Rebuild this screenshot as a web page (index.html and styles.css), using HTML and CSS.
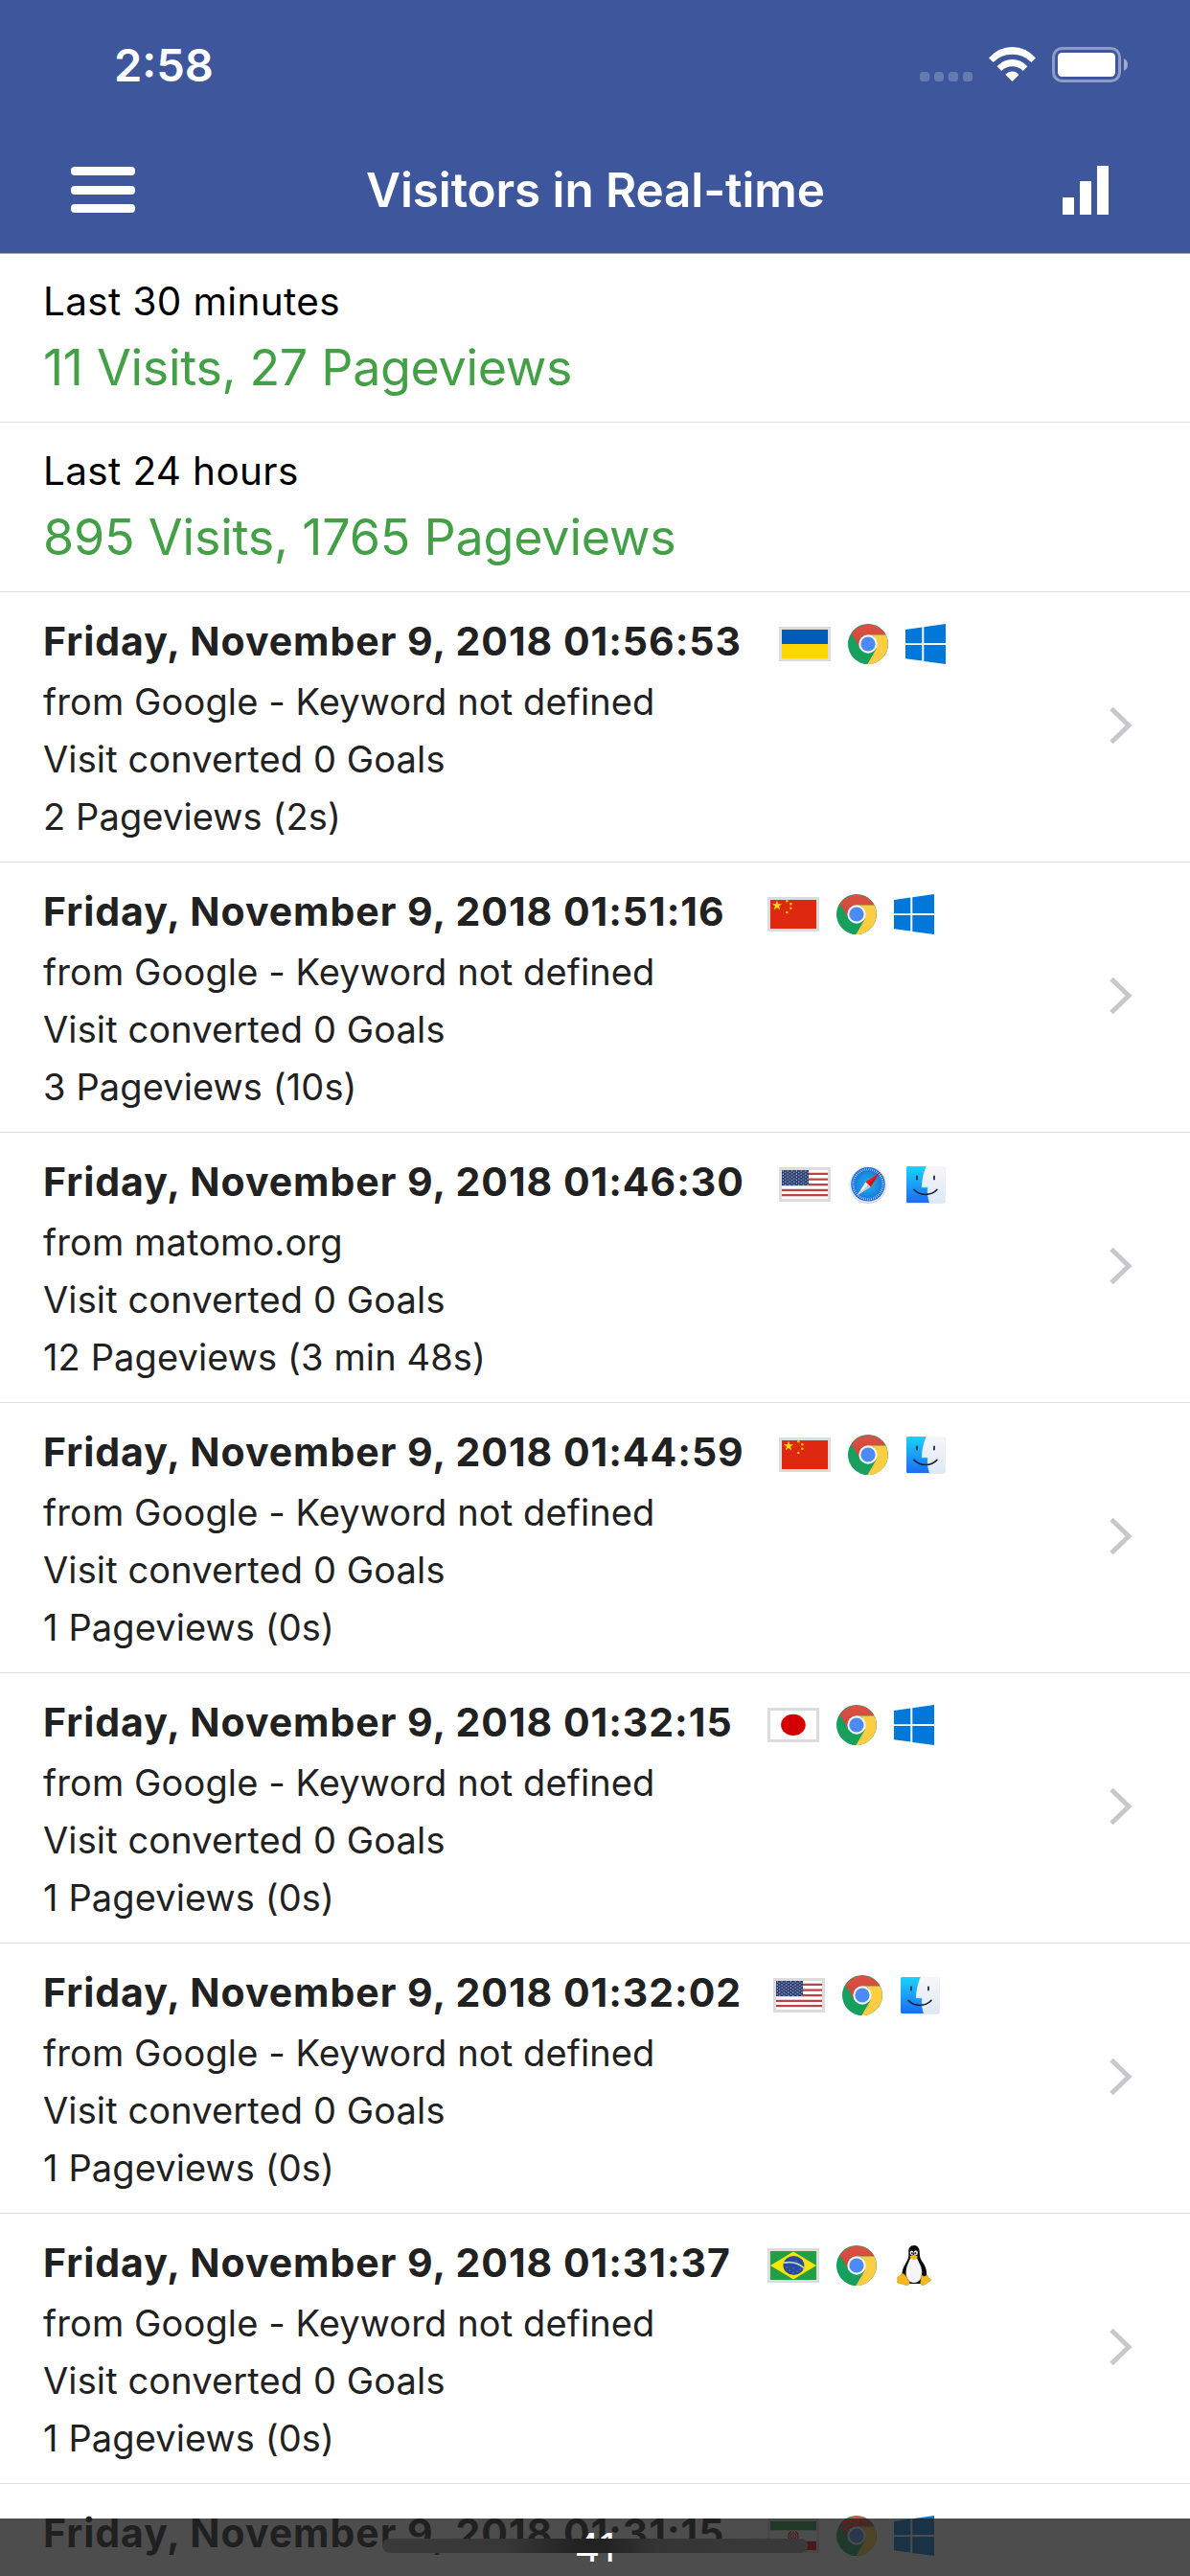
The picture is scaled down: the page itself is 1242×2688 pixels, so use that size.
FILE: index.html
```html
<!DOCTYPE html>
<html lang="en">
<head>
<meta charset="utf-8">
<title>Visitors in Real-time</title>
<link rel="stylesheet" href="styles.css">
</head>
<body>
<svg class="sprite" aria-hidden="true">
  <defs>
    <linearGradient id="g-finder" x1="0" y1="0" x2="0" y2="1"><stop offset="0" stop-color="#19d3fd"/><stop offset="1" stop-color="#1c6cf2"/></linearGradient>
    <linearGradient id="g-face" x1="0" y1="0" x2="0" y2="1"><stop offset="0" stop-color="#f7f6f6"/><stop offset="1" stop-color="#dde9f6"/></linearGradient>
    <radialGradient id="g-safari"><stop offset="0" stop-color="#1cb4e0"/><stop offset="0.6" stop-color="#1b8de0"/><stop offset="1" stop-color="#2266dc"/></radialGradient>
    <linearGradient id="g-red" x1="0" y1="0" x2="0" y2="1"><stop offset="0" stop-color="#dd5144"/><stop offset="1" stop-color="#c9453a"/></linearGradient>
  </defs>
  <symbol id="chrome" viewBox="0 0 42 42">
    <circle cx="21" cy="21" r="21" fill="#17a05d"/>
    <path d="M3.4 10.5A21 21 0 0 1 39.6 11.5H21L12.6 25.3Z" fill="url(#g-red)"/>
    <path d="M39.4 11.4A21 21 0 0 1 20.2 42L30 25.5 27 13 21 11.4Z" fill="#ffcd42"/>
    <path d="M3.4 10.5L12.6 26 15 31 26.5 31 20.2 42A21 21 0 0 1 3.4 10.5Z" fill="#17a05d"/>
    <path d="M26.5 31L30 25.3 24 41Z" fill="#d9a935" opacity=".5"/>
    <circle cx="21" cy="21" r="9.7" fill="#f4f4f4"/>
    <circle cx="21" cy="21" r="7.6" fill="#4c8bf5"/>
  </symbol>
  <symbol id="windows" viewBox="0 0 42 42">
    <path fill="#0078d9" d="M0 6L17.3 3.5V20.2H0ZM19.3 3.2L42 0V20H19.3ZM0 22H17.3V38.6L0 36.2ZM19.3 22H42V42L19.3 38.9Z"/>
  </symbol>
  <symbol id="finder" viewBox="0 0 42 42">
    <rect x="1" y="2.6" width="40.4" height="38" rx="1.6" fill="#cfd4da"/>
    <rect x="1" y="2" width="40.2" height="38" rx="1.6" fill="url(#g-face)"/>
    <path d="M2.6 2H22C19 9 17.5 16 17.3 23.8H23.4C23 30 23.4 35 25.3 40H2.6Q1 40 1 38.4V3.6Q1 2 2.6 2Z" fill="url(#g-finder)"/>
    <path d="M22 2C19 9 17.5 16 17.3 23.8H23.4C23 30 23.4 35 25.3 40" fill="none" stroke="#fff" stroke-width=".8" opacity=".6"/>
    <path d="M12 12.3V15.6M30 12.3V15.6" stroke="#1b2b45" stroke-width="1.8" stroke-linecap="round"/>
    <path d="M9 26.3C15 33.2 27 33.2 33 26.3" fill="none" stroke="#101c30" stroke-width="1.6" stroke-linecap="round"/>
  </symbol>
  <symbol id="safari" viewBox="0 0 42 42">
    <circle cx="21" cy="21.6" r="19.4" fill="#c9c9c9"/>
    <circle cx="21" cy="20.8" r="19.2" fill="#eceef0"/>
    <circle cx="21" cy="20.8" r="17.8" fill="url(#g-safari)"/>
    <circle cx="21" cy="20.8" r="15.6" fill="none" stroke="#bfe0fa" stroke-width="2.2" stroke-dasharray=".7 1.34"/>
    <path d="M33 8.6L18.4 18.4 23.6 23.4Z" fill="#fb1715"/>
    <path d="M33 8.6L21 20.9 23.6 23.4Z" fill="#d10f14"/>
    <path d="M9.6 32.2L18.4 18.4 23.6 23.4Z" fill="#f4f6f8"/>
    <path d="M9.6 32.2L21 20.9 23.6 23.4Z" fill="#c8ccd0"/>
  </symbol>
  <symbol id="tux" viewBox="0 0 42 42">
    <path d="M21 0C16.5 0 15 3.4 15.3 7C15.6 12 15 14 12.4 18.5C9.8 23 8 27 8.4 32L12 40H30L34 32C34.8 26 32.4 20.5 29.6 17C27 13.6 26.9 11 26.8 7C26.6 2.6 24.4 0 21 0Z" fill="#0c0c0c"/>
    <path d="M17 13.6C15.4 18 12.6 22 12.6 29C12.6 35 16 39 21 39C26 39 29.2 35 29.2 28C29.2 22 25.6 18 24.4 13.6Z" fill="#f5f5f5"/>
    <ellipse cx="18.5" cy="7.8" rx="1.8" ry="2.3" fill="#eee"/><ellipse cx="22.8" cy="7.8" rx="2.1" ry="2.5" fill="#eee"/>
    <circle cx="18.9" cy="8.2" r=".9" fill="#111"/><circle cx="22.4" cy="8.2" r="1" fill="#111"/>
    <path d="M16.4 11.6Q20 8.4 24.8 11.4Q24 14.4 20.4 15Q17.2 14.4 16.4 11.6Z" fill="#f5bd18"/>
    <path d="M8.8 29.4C6.8 29.6 6.6 32.4 4.2 32.8C3 33.2 4.4 36 3.4 38.6C5 40.4 9.4 40 12.4 41.6C15.4 42 17 40 16 37.6C14 34.4 11.6 29.4 8.8 29.4Z" fill="#f5b91c" stroke="#b98307" stroke-width=".5"/>
    <path d="M29.2 31C27.6 31 28.6 36 27.6 39C28 42 31 42.2 33 40.4C35 38.4 38.6 37.4 38.8 36C37 35 35.6 33 34.6 30.6C33 32.4 31 33 29.2 31Z" fill="#f5b91c" stroke="#b98307" stroke-width=".5"/>
  </symbol>
  <symbol id="ua" viewBox="0 0 48 30"><path fill="#005bbd" d="M0 0H48V15H0Z"/><path fill="#ffd600" d="M0 15H48V30H0Z"/></symbol>
  <symbol id="cn" viewBox="0 0 48 30">
    <path fill="#de2910" d="M0 0H48V30H0Z"/>
    <path fill="#ffde00" d="M7 .6L8.2 4.2H12.2L9 6.6L10.2 10.4L7 8.1L3.8 10.4L5 6.6L1.8 4.2H5.8Z"/>
    <g fill="#ffc400"><circle cx="17.3" cy="1.2" r="1.3"/><circle cx="21.3" cy="4.2" r="1.3"/><circle cx="21.3" cy="8.8" r="1.3"/><circle cx="17.3" cy="13" r="1.3"/></g>
  </symbol>
  <pattern id="stars" width="4.7" height="3.2" patternUnits="userSpaceOnUse"><circle cx="1.3" cy=".9" r=".62" fill="#dfe3ee"/><circle cx="3.6" cy="2.5" r=".62" fill="#dfe3ee"/></pattern>
  <symbol id="us" viewBox="0 0 48 30">
    <path fill="#fff" d="M0 0H48V30H0Z"/>
    <path stroke="#c04048" stroke-width="2.3" d="M0 3.8H48M0 9.6H48M0 15.2H48M0 20.8H48M0 26.2H48"/>
    <path fill="#25396f" d="M0 0H28V16H0Z"/><path fill="url(#stars)" d="M0 0H28V16H0Z"/>
  </symbol>
  <symbol id="jp" viewBox="0 0 48 30"><path fill="#fff" d="M0 0H48V30H0Z"/><ellipse cx="23.9" cy="14.9" rx="12.8" ry="11.2" fill="#d30000"/></symbol>
  <symbol id="br" viewBox="0 0 48 30">
    <path fill="#229e45" d="M0 0H48V30H0Z"/><path fill="#f8e509" d="M24 .6L48 15L24 29.6L0 15Z"/>
    <ellipse cx="24.4" cy="15" rx="11" ry="10" fill="#2b49a3"/>
    <path d="M14 12.2C22 10.8 30 13 35 17.6" fill="none" stroke="#b9d8c4" stroke-width="1.7"/>
    <g fill="#8fa3d6"><circle cx="17" cy="17" r=".6"/><circle cx="20" cy="20" r=".6"/><circle cx="24" cy="18" r=".6"/><circle cx="28" cy="21" r=".6"/><circle cx="31" cy="19" r=".6"/><circle cx="24" cy="22.6" r=".6"/><circle cx="27" cy="10" r=".6"/></g>
  </symbol>
  <symbol id="ir" viewBox="0 0 48 30">
    <path fill="#fff" d="M0 0H48V30H0Z"/><path fill="#239f40" d="M0 0H48V9.2H0Z"/><path fill="#da0000" d="M0 20.8H48V30H0Z"/>
    <path fill="none" stroke="#da0000" stroke-width="1.1" d="M24 10V20M22 10.6C17.6 13 18 18 22 19.6M26 10.6C30.4 13 30 18 26 19.6M22.4 12C20.6 14.6 21 17 23 18.6M25.6 12C27.4 14.6 27 17 25 18.6"/>
  </symbol>
</svg>

<div class="screen">
  <header class="header">
    <div class="status">
      <span class="clock">2:58</span>
      <div class="indicators">
        <span class="cell"><i></i><i></i><i></i><i></i></span>
        <svg class="wifi" viewBox="0 0 49 36"><path fill="#fff" d="M0 11.4Q10.4 0 24.5 0T49 11.4L44.4 16Q36 7.8 24.5 7.8T4.6 16ZM8.6 20.2Q15.4 13 24.5 13T40.4 20.2L35.8 24.9Q31 20.3 24.5 20.3T13.2 24.9ZM17.4 29Q20.4 25.6 24.5 25.6T31.6 29L24.5 36Z"/></svg>
        <svg class="battery" viewBox="0 0 80 37"><rect x="1.5" y="1.5" width="69" height="34" rx="9" fill="none" stroke="#fff" stroke-opacity=".42" stroke-width="3"/><rect x="6" y="6" width="60" height="25" rx="4.5" fill="#fff"/><path d="M75 12Q79 14 79 18.5T75 25Z" fill="#fff" fill-opacity=".5"/></svg>
      </div>
    </div>
    <nav class="nav">
      <span class="menu"><i></i><i></i><i></i></span>
      <h1 class="title">Visitors in Real-time</h1>
      <svg class="chart" viewBox="0 0 48 51"><path fill="#fff" d="M0 33H12V51H0ZM18 16H30V51H18ZM36 0H48V51H36Z"/></svg>
    </nav>
  </header>

  <section class="summary">
    <p class="period">Last 30 minutes</p>
    <p class="total total-short">11 Visits, 27 Pageviews</p>
  </section>
  <section class="summary summary-day">
    <p class="period">Last 24 hours</p>
    <p class="total">895 Visits, 1765 Pageviews</p>
  </section>

  <main class="visits">
    <article class="visit">
      <div class="details">
        <div class="head"><h2 class="when when-wide">Friday, November 9, 2018 01:56:53</h2><svg class="flag"><use href="#ua"/></svg><svg class="icon"><use href="#chrome"/></svg><svg class="icon"><use href="#windows"/></svg></div>
        <p>from Google - Keyword not defined</p><p>Visit converted 0 Goals</p><p>2 Pageviews (2s)</p>
      </div>
      <svg class="chevron" viewBox="0 0 24 40"><path d="M2 2.5L20 20L2 37.5"/></svg>
    </article>
    <article class="visit">
      <div class="details">
        <div class="head"><h2 class="when">Friday, November 9, 2018 01:51:16</h2><svg class="flag"><use href="#cn"/></svg><svg class="icon"><use href="#chrome"/></svg><svg class="icon"><use href="#windows"/></svg></div>
        <p>from Google - Keyword not defined</p><p>Visit converted 0 Goals</p><p>3 Pageviews (10s)</p>
      </div>
      <svg class="chevron" viewBox="0 0 24 40"><path d="M2 2.5L20 20L2 37.5"/></svg>
    </article>
    <article class="visit">
      <div class="details">
        <div class="head"><h2 class="when when-wide">Friday, November 9, 2018 01:46:30</h2><svg class="flag"><use href="#us"/></svg><svg class="icon"><use href="#safari"/></svg><svg class="icon"><use href="#finder"/></svg></div>
        <p>from matomo.org</p><p>Visit converted 0 Goals</p><p>12 Pageviews (3 min 48s)</p>
      </div>
      <svg class="chevron" viewBox="0 0 24 40"><path d="M2 2.5L20 20L2 37.5"/></svg>
    </article>
    <article class="visit">
      <div class="details">
        <div class="head"><h2 class="when when-wide">Friday, November 9, 2018 01:44:59</h2><svg class="flag"><use href="#cn"/></svg><svg class="icon"><use href="#chrome"/></svg><svg class="icon"><use href="#finder"/></svg></div>
        <p>from Google - Keyword not defined</p><p>Visit converted 0 Goals</p><p>1 Pageviews (0s)</p>
      </div>
      <svg class="chevron" viewBox="0 0 24 40"><path d="M2 2.5L20 20L2 37.5"/></svg>
    </article>
    <article class="visit">
      <div class="details">
        <div class="head"><h2 class="when">Friday, November 9, 2018 01:32:15</h2><svg class="flag"><use href="#jp"/></svg><svg class="icon"><use href="#chrome"/></svg><svg class="icon"><use href="#windows"/></svg></div>
        <p>from Google - Keyword not defined</p><p>Visit converted 0 Goals</p><p>1 Pageviews (0s)</p>
      </div>
      <svg class="chevron" viewBox="0 0 24 40"><path d="M2 2.5L20 20L2 37.5"/></svg>
    </article>
    <article class="visit">
      <div class="details">
        <div class="head"><h2 class="when when-mid">Friday, November 9, 2018 01:32:02</h2><svg class="flag"><use href="#us"/></svg><svg class="icon"><use href="#chrome"/></svg><svg class="icon"><use href="#finder"/></svg></div>
        <p>from Google - Keyword not defined</p><p>Visit converted 0 Goals</p><p>1 Pageviews (0s)</p>
      </div>
      <svg class="chevron" viewBox="0 0 24 40"><path d="M2 2.5L20 20L2 37.5"/></svg>
    </article>
    <article class="visit">
      <div class="details">
        <div class="head"><h2 class="when">Friday, November 9, 2018 01:31:37</h2><svg class="flag"><use href="#br"/></svg><svg class="icon"><use href="#chrome"/></svg><svg class="icon"><use href="#tux"/></svg></div>
        <p>from Google - Keyword not defined</p><p>Visit converted 0 Goals</p><p>1 Pageviews (0s)</p>
      </div>
      <svg class="chevron" viewBox="0 0 24 40"><path d="M2 2.5L20 20L2 37.5"/></svg>
    </article>
    <article class="visit">
      <div class="details">
        <div class="head"><h2 class="when">Friday, November 9, 2018 01:31:15</h2><svg class="flag"><use href="#ir"/></svg><svg class="icon"><use href="#chrome"/></svg><svg class="icon"><use href="#windows"/></svg></div>
      </div>
    </article>
  </main>

  <div class="counter">41</div>
  <div class="home-bar"></div>
</div>
</body>
</html>
```
FILE: styles.css
```css
* { box-sizing: border-box; margin: 0; padding: 0; }
body { background: #fff; font-family: Inter, "Liberation Sans", sans-serif; }
.sprite { position: absolute; width: 0; height: 0; }
.screen { position: relative; width: 1242px; height: 2688px; overflow: hidden; background: #fff; }

.header { height: 265px; background: #3e569b; border-bottom: 1px solid #a3a7ad; color: #fff; }
.status { display: flex; justify-content: space-between; height: 132px; padding: 0 64px 0 119px; }
.clock { padding-top: 38px; font-size: 47px; line-height: 60px; font-weight: 600; }
.indicators { display: flex; align-items: flex-start; padding-top: 49px; }
.cell { display: flex; gap: 5px; margin: 26px 17px 0 0; }
.cell i { width: 10px; height: 10px; border-radius: 3.5px; background: rgba(255,255,255,.22); }
.wifi { width: 49px; height: 36px; margin-right: 17px; }
.battery { width: 80px; height: 37px; }
.nav { display: flex; justify-content: space-between; align-items: center; height: 132px; padding: 0 85px 0 74px; }
.menu { display: flex; flex-direction: column; gap: 10.5px; width: 67px; }
.menu i { height: 9px; border-radius: 4px; background: #fff; }
.title { margin-right: 7px; font-size: 49.5px; line-height: 60px; font-weight: 600; letter-spacing: -.12px; white-space: nowrap; }
.chart { width: 48px; height: 51px; }

.summary { height: 176px; padding: 20px 45px 0; border-bottom: 1px solid #dedede; }
.summary-day { height: 177px; padding-top: 21px; }
.period { font-size: 40.5px; line-height: 60px; letter-spacing: .35px; color: #000; }
.total { margin-top: 3px; font-size: 52px; line-height: 72px; letter-spacing: -.2px; color: #43a047; }
.total-short { letter-spacing: -.32px; }

.visit { display: flex; justify-content: space-between; height: 282px; padding: 21px 60px 0 45px; border-bottom: 1px solid #dedede; color: #212121; }
.head { display: flex; height: 63px; }
.when { width: 756px; font-size: 41px; line-height: 60px; font-weight: 700; letter-spacing: .97px; white-space: nowrap; }
.when-wide { width: 768px; }
.when-mid { width: 762px; }
.details p { font-size: 38px; line-height: 60px; letter-spacing: .12px; white-space: nowrap; }
.flag { width: 54px; height: 36px; margin: 15px 18px 0 0; border: 3px solid #dcdcdc; }
.icon { width: 42px; height: 42px; margin: 12px 18px 0 0; }
.chevron { width: 24px; height: 40px; margin-top: 98px; }
.chevron path { fill: none; stroke: #c7c7cc; stroke-width: 5; }

.counter { position: absolute; left: 0; right: 0; bottom: 0; height: 60px; background: rgba(32,32,32,.8); color: #fff; font-size: 41px; line-height: 60px; text-align: center; }
.home-bar { position: absolute; left: 399px; top: 2649px; width: 444px; height: 15px; border-radius: 8px; background: linear-gradient(90deg, #3a3a3a, #373737 30%, #222 46%, #222 52%, #353535 65%, #3a3a3a); }
```
